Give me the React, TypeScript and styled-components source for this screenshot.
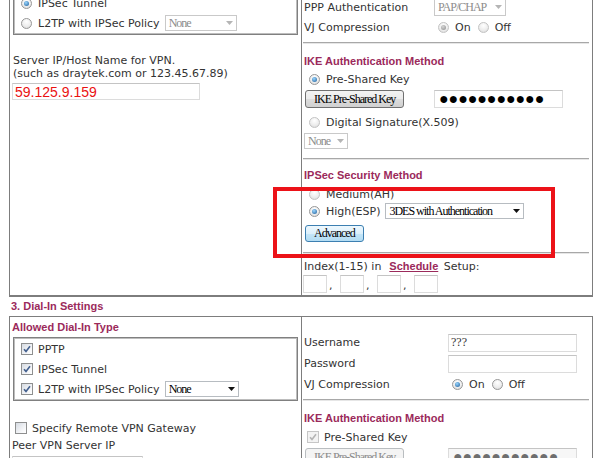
import React from 'react';
import styled, { createGlobalStyle, css } from 'styled-components';

const MAROON = '#9b2a5b';
const LINE = '#7d7d7d';

const GlobalStyle = createGlobalStyle`
  html, body { margin: 0; padding: 0; background: #fff; }
  body {
    font-family: "DejaVu Sans", Verdana, sans-serif;
    font-size: 11px;
    color: #333;
  }
  #root { width: 600px; height: 458px; overflow: hidden; }
`;

const Viewport = styled.div`
  position: relative;
  width: 600px;
  height: 458px;
  overflow: hidden;
`;

const Page = styled.div`
  margin-top: -32px;
  margin-left: 9px;
  width: 584px;
`;

const Table = styled.div<{ $open?: boolean }>`
  display: grid;
  grid-template-columns: 292px 1fr;
  border: 1px solid ${LINE};
  border-bottom-width: ${p => (p.$open ? 1 : 2)}px;
`;

const LeftCell = styled.div`
  border-right: 1px solid ${LINE};
  display: flex;
  flex-direction: column;
  align-items: flex-start;
`;

const RightCell = styled.div<{ $padTop: number }>`
  display: flex;
  flex-direction: column;
  padding: ${p => p.$padTop}px 0 2px 0;
`;

const SectionTitle = styled.div`
  height: 19px;
  line-height: 19px;
  padding-left: 2px;
  font-family: "Liberation Sans", Arial, sans-serif;
  font-weight: bold;
  font-size: 11px;
  color: ${MAROON};
`;

const Heading = styled.div<{ $top: number; $h?: number }>`
  margin-top: ${p => p.$top}px;
  height: ${p => p.$h ?? 18}px;
  line-height: ${p => p.$h ?? 18}px;
  padding-left: 2px;
  font-family: "Liberation Sans", Arial, sans-serif;
  font-weight: bold;
  font-size: 11px;
  color: ${MAROON};
`;

const Fieldset = styled.div<{ $top: number }>`
  align-self: stretch;
  margin: ${p => p.$top}px 3px 0 3px;
  border: 1px solid #808080;
  box-shadow: inset 0 0 0 1px #bdbdbd;
  padding: 1px 0 1px 3px;
  display: flex;
  flex-direction: column;
`;

const OptionLine = styled.div<{ $h?: number; $top?: number; $pad?: number }>`
  display: flex;
  align-items: center;
  height: ${p => p.$h ?? 20}px;
  margin-top: ${p => p.$top ?? 0}px;
  padding-left: ${p => p.$pad ?? 0}px;
  white-space: nowrap;
`;

const RadioDot = styled.span<{ $checked?: boolean; $disabled?: boolean }>`
  position: relative;
  flex: none;
  display: inline-block;
  box-sizing: border-box;
  width: 11px;
  height: 11px;
  margin: 0 6px 0 4px;
  border-radius: 50%;
  border: 1px solid ${p => (p.$disabled ? '#c3c3c3' : '#979797')};
  background: radial-gradient(circle at 50% 30%, #ffffff 0%, #ececec 60%, #d3d3d3 100%);
  ${p =>
    p.$checked &&
    css`
      &::after {
        content: '';
        position: absolute;
        left: 2px;
        top: 2px;
        width: 5px;
        height: 5px;
        border-radius: 50%;
        background: ${p.$disabled
          ? 'radial-gradient(circle at 40% 35%, #d6d6d6, #8c8c8c)'
          : 'radial-gradient(circle at 40% 35%, #9ad6ff, #1b5b97)'};
      }
    `}
`;

const CheckBox = styled.span<{ $disabled?: boolean; $left?: number }>`
  flex: none;
  display: inline-flex;
  align-items: center;
  justify-content: center;
  box-sizing: border-box;
  width: 12px;
  height: 12px;
  margin: 0 5px 0 ${p => p.$left ?? 4}px;
  border: 1px solid ${p => (p.$disabled ? '#c6c6c6' : '#8e8f8f')};
  background: ${p =>
    p.$disabled ? '#f3f3f3' : 'linear-gradient(135deg, #d6dbe2 0%, #f6f7f9 70%, #ffffff 100%)'};
`;

const Check = ({ disabled }: { disabled?: boolean }) => (
  <svg width="8" height="8" viewBox="0 0 8 8">
    <path
      d="M1 4.2 L3 6.4 L7 1.2"
      fill="none"
      stroke={disabled ? '#b4b4b4' : '#44608e'}
      strokeWidth="1.6"
    />
  </svg>
);

const Box = ({ checked, disabled, left }: { checked?: boolean; disabled?: boolean; left?: number }) => (
  <CheckBox $disabled={disabled} $left={left}>
    {checked && <Check disabled={disabled} />}
  </CheckBox>
);

const serifControl = css`
  font-family: "Liberation Serif", "Times New Roman", serif;
  font-size: 12px;
  letter-spacing: -1px;
`;

const SelectBox = styled.div<{ $w: number; $h: number; $disabled?: boolean; $ml?: number }>`
  flex: none;
  box-sizing: border-box;
  display: flex;
  align-items: center;
  justify-content: space-between;
  width: ${p => p.$w}px;
  height: ${p => p.$h}px;
  margin-left: ${p => p.$ml ?? 0}px;
  padding: 0 3px 0 3px;
  background: #fff;
  border: 1px solid ${p => (p.$disabled ? '#c9c9c9' : '#b7bcc1')};
  ${serifControl};
  color: ${p => (p.$disabled ? '#8c8c8c' : '#000')};
  white-space: nowrap;
  overflow: hidden;
`;

const Select = ({
  w,
  h,
  disabled,
  ml,
  children,
}: {
  w: number;
  h: number;
  disabled?: boolean;
  ml?: number;
  children: React.ReactNode;
}) => (
  <SelectBox $w={w} $h={h} $disabled={disabled} $ml={ml}>
    <span>{children}</span>
    <svg width="7" height="4" viewBox="0 0 7 4">
      <path d="M0 0 H7 L3.5 4 Z" fill={disabled ? '#b5b5b5' : '#111'} />
    </svg>
  </SelectBox>
);

const Button = styled.button<{ $variant?: 'normal' | 'focus' | 'disabled'; $h?: number; $ml?: number }>`
  box-sizing: border-box;
  height: ${p => p.$h ?? 18}px;
  margin: 0 0 0 ${p => p.$ml ?? 3}px;
  padding: 0 8px;
  border-radius: 3px;
  ${serifControl};
  white-space: nowrap;
  cursor: default;
  ${p =>
    p.$variant === 'focus'
      ? css`
          border: 1px solid #3c7fb1;
          background: linear-gradient(#eef8fe 0%, #dcf0fb 50%, #c6e6f8 50%, #b2dcf3 100%);
          color: #000;
        `
      : p.$variant === 'disabled'
      ? css`
          border: 1px solid #b9bdc0;
          background: #f4f4f4;
          color: #8a8a8a;
        `
      : css`
          border: 1px solid #707070;
          background: linear-gradient(#f3f3f3 0%, #ebebeb 50%, #dddddd 50%, #d0d0d0 100%);
          color: #000;
        `}
`;

const TextInput = styled.input<{ $w: number; $h?: number; $ml?: number; $tone?: 'red' | 'dots' | 'dim' | 'plain' }>`
  box-sizing: border-box;
  flex: none;
  width: ${p => p.$w}px;
  height: ${p => p.$h ?? 18}px;
  margin: 0 0 0 ${p => p.$ml ?? 0}px;
  padding: 0 2px;
  border: 1px solid #dcdcdc;
  border-top-color: #c4c4c4;
  background: #fff;
  outline: none;
  ${p =>
    p.$tone === 'red'
      ? css`
          font-family: "Liberation Sans", Arial, sans-serif;
          font-size: 14px;
          color: #ea1111;
        `
      : p.$tone === 'dots' || p.$tone === 'dim'
      ? css`
          font-family: "Liberation Sans", Arial, sans-serif;
          font-size: 16px;
          letter-spacing: -0.1px;
          padding-left: 4px;
          color: ${p.$tone === 'dots' ? '#000' : '#6e6e6e'};
          background: ${p.$tone === 'dim' ? '#f7f7f7' : '#fff'};
        `
      : css`
          ${serifControl};
          letter-spacing: 0;
          color: #333;
        `}
`;

const FormRow = styled.div<{ $label: number; $h: number; $top?: number }>`
  display: grid;
  grid-template-columns: ${p => p.$label}px 1fr;
  align-items: center;
  height: ${p => p.$h}px;
  margin-top: ${p => p.$top ?? 0}px;
`;

const Label = styled.span`
  padding-left: 2px;
  white-space: nowrap;
`;

const Options = styled.div`
  display: flex;
  align-items: center;
`;

const OptionText = styled.span`
  margin-right: 3px;
  white-space: nowrap;
`;

const Separator = styled.div<{ $top: number }>`
  margin: ${p => p.$top}px 3px 0 1px;
  height: 0;
  border-top: 1px solid #a8a8a8;
  border-bottom: 1px solid #e6e6e6;
`;

const Hint = styled.div`
  margin-top: 19px;
  padding-left: 3px;
  line-height: 13px;
  white-space: nowrap;
`;

const PlainLine = styled.div<{ $top: number; $h: number }>`
  margin-top: ${p => p.$top}px;
  height: ${p => p.$h}px;
  line-height: ${p => p.$h}px;
  padding-left: 2px;
  white-space: nowrap;
`;

const ScheduleLink = styled.a`
  margin: 0 2px 0 8px;
  font-family: "Liberation Sans", Arial, sans-serif;
  font-weight: bold;
  font-size: 11px;
  color: ${MAROON};
  text-decoration: underline;
`;

const IndexFields = styled.div`
  display: flex;
  align-items: stretch;
  height: 18px;
  margin-top: 1px;
  padding-left: 1px;
`;

const Comma = styled.span`
  width: 11px;
  padding-left: 2px;
  line-height: 22px;
`;

const RedFrame = styled.div`
  position: absolute;
  left: 273px;
  top: 187px;
  width: 282px;
  height: 71px;
  box-sizing: border-box;
  border: 4px solid #ec1218;
  pointer-events: none;
`;

const Radio = ({ checked, disabled }: { checked?: boolean; disabled?: boolean }) => (
  <RadioDot $checked={checked} $disabled={disabled} />
);

export default function App() {
  return (
    <>
      <GlobalStyle />
      <Viewport>
        <Page>
          <Table>
            <LeftCell>
              <Fieldset $top={2}>
                <OptionLine>
                  <Radio />
                  PPTP
                </OptionLine>
                <OptionLine>
                  <Radio checked />
                  IPSec Tunnel
                </OptionLine>
                <OptionLine>
                  <Radio />
                  L2TP with IPSec Policy
                  <Select w={72} h={16} disabled ml={5}>
                    None
                  </Select>
                </OptionLine>
              </Fieldset>
              <Hint>
                Server IP/Host Name for VPN.
                <br />
                (such as draytek.com or 123.45.67.89)
              </Hint>
              <TextInput $w={188} $h={17} $ml={2} $tone="red" readOnly value="59.125.9.159" style={{ marginTop: 3 }} />
            </LeftCell>
            <RightCell $padTop={8}>
              <FormRow $label={132} $h={20}>
                <Label>Password</Label>
                <TextInput $w={129} $tone="plain" readOnly value="" />
              </FormRow>
              <FormRow $label={132} $h={20}>
                <Label>PPP Authentication</Label>
                <Select w={72} h={17} disabled>
                  PAP/CHAP
                </Select>
              </FormRow>
              <FormRow $label={132} $h={20}>
                <Label>VJ Compression</Label>
                <Options>
                  <Radio checked disabled />
                  <OptionText>On</OptionText>
                  <Radio disabled />
                  <OptionText>Off</OptionText>
                </Options>
              </FormRow>
              <Separator $top={5} />
              <Heading $top={8}>IKE Authentication Method</Heading>
              <OptionLine $h={18} $pad={3}>
                <Radio checked />
                Pre-Shared Key
              </OptionLine>
              <FormRow $label={132} $h={18} $top={2}>
                <div>
                  <Button $variant="normal">IKE Pre-Shared Key</Button>
                </div>
                <TextInput $w={129} $tone="dots" readOnly value="●●●●●●●●●●●" />
              </FormRow>
              <OptionLine $h={18} $top={5} $pad={3}>
                <Radio disabled />
                Digital Signature(X.509)
              </OptionLine>
              <OptionLine $h={16} $top={2} $pad={2}>
                <Select w={44} h={16} disabled>
                  None
                </Select>
              </OptionLine>
              <Separator $top={9} />
              <Heading $top={6}>IPSec Security Method</Heading>
              <OptionLine $h={18} $top={1} $pad={3}>
                <Radio disabled />
                Medium(AH)
              </OptionLine>
              <OptionLine $h={16} $pad={3}>
                <Radio checked />
                High(ESP)
                <Select w={139} h={16} ml={5}>
                  3DES with Authentication
                </Select>
              </OptionLine>
              <OptionLine $h={17} $top={6}>
                <Button $variant="focus" $h={17}>
                  Advanced
                </Button>
              </OptionLine>
              <Separator $top={10} />
              <PlainLine $top={4} $h={16}>
                Index(1-15) in<ScheduleLink>Schedule</ScheduleLink> Setup:
              </PlainLine>
              <IndexFields>
                <TextInput $w={24} $tone="plain" readOnly value="" />
                <Comma>,</Comma>
                <TextInput $w={24} $tone="plain" readOnly value="" />
                <Comma>,</Comma>
                <TextInput $w={24} $tone="plain" readOnly value="" />
                <Comma>,</Comma>
                <TextInput $w={24} $tone="plain" readOnly value="" />
              </IndexFields>
            </RightCell>
          </Table>

          <SectionTitle>3. Dial-In Settings</SectionTitle>

          <Table $open>
            <LeftCell>
              <Heading $top={0} $h={20}>
                Allowed Dial-In Type
              </Heading>
              <Fieldset $top={0}>
                <OptionLine>
                  <Box checked left={4} />
                  PPTP
                </OptionLine>
                <OptionLine>
                  <Box checked left={4} />
                  IPSec Tunnel
                </OptionLine>
                <OptionLine>
                  <Box checked left={4} />
                  L2TP with IPSec Policy
                  <Select w={74} h={16} ml={5}>
                    None
                  </Select>
                </OptionLine>
              </Fieldset>
              <OptionLine $h={16} $top={19} $pad={1}>
                <Box />
                Specify Remote VPN Gateway
              </OptionLine>
              <PlainLine $top={2} $h={16}>
                Peer VPN Server IP
              </PlainLine>
              <TextInput $w={131} $ml={2} $tone="plain" readOnly value="" style={{ marginTop: 2 }} />
            </LeftCell>
            <RightCell $padTop={15}>
              <FormRow $label={146} $h={21}>
                <Label>Username</Label>
                <TextInput $w={129} $tone="plain" readOnly value="???" />
              </FormRow>
              <FormRow $label={146} $h={21}>
                <Label>Password</Label>
                <TextInput $w={129} $tone="plain" readOnly value="" />
              </FormRow>
              <FormRow $label={146} $h={21}>
                <Label>VJ Compression</Label>
                <Options>
                  <Radio checked />
                  <OptionText>On</OptionText>
                  <Radio />
                  <OptionText>Off</OptionText>
                </Options>
              </FormRow>
              <Separator $top={4} />
              <Heading $top={8}>IKE Authentication Method</Heading>
              <OptionLine $h={18} $top={1} $pad={1}>
                <Box checked disabled />
                Pre-Shared Key
              </OptionLine>
              <FormRow $label={146} $h={18} $top={2}>
                <div>
                  <Button $variant="disabled">IKE Pre-Shared Key</Button>
                </div>
                <TextInput $w={129} $tone="dim" readOnly value="●●●●●●●●●●●" />
              </FormRow>
            </RightCell>
          </Table>
        </Page>
        <RedFrame />
      </Viewport>
    </>
  );
}
